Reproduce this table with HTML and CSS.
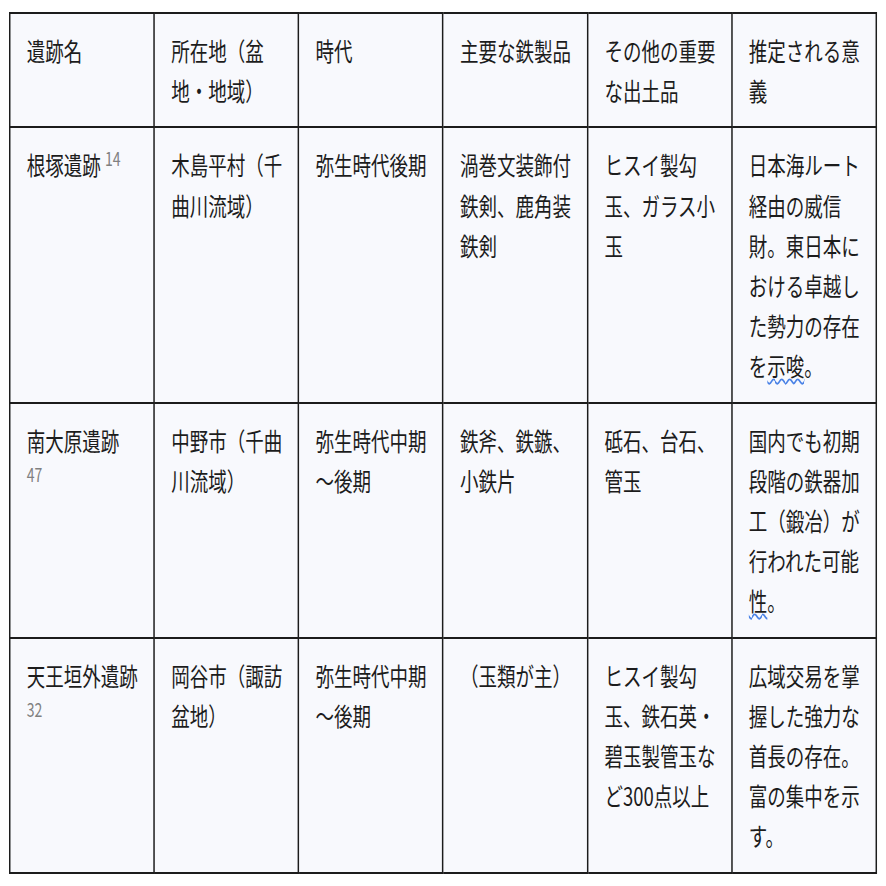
FILE: index.html
```html
<!DOCTYPE html>
<html lang="ja">
<head>
<meta charset="utf-8">
<title>遺跡一覧</title>
<link rel="stylesheet" href="styles.css">
</head>
<body>
<div class="frame">
<table class="sites">
  <thead>
    <tr>
      <th>遺跡名</th>
      <th>所在地（盆地・地域）</th>
      <th>時代</th>
      <th>主要な鉄製品</th>
      <th>その他の重要な出土品</th>
      <th>推定される意義</th>
    </tr>
  </thead>
  <tbody>
    <tr>
      <td>根塚遺跡 <sup class="cite">14</sup></td>
      <td>木島平村（千曲川流域）</td>
      <td>弥生時代後期</td>
      <td>渦巻文装飾付鉄剣、鹿角装鉄剣</td>
      <td>ヒスイ製勾玉、ガラス小玉</td>
      <td>日本海ルート経由の威信財。東日本における卓越した勢力の存在を<span class="spell">示唆</span>。</td>
    </tr>
    <tr>
      <td>南大原遺跡 <sup class="cite">47</sup></td>
      <td>中野市（千曲川流域）</td>
      <td>弥生時代中期～後期</td>
      <td>鉄斧、鉄鏃、小鉄片</td>
      <td>砥石、台石、管玉</td>
      <td>国内でも初期段階の鉄器加工（鍛冶）が行われた可能<span class="spell">性</span>。</td>
    </tr>
    <tr>
      <td>天王垣外遺跡 <sup class="cite">32</sup></td>
      <td>岡谷市（諏訪盆地）</td>
      <td>弥生時代中期～後期</td>
      <td>（玉類が主）</td>
      <td>ヒスイ製勾玉、鉄石英・碧玉製管玉など300点以上</td>
      <td>広域交易を掌握した強力な首長の存在。富の集中を示す。</td>
    </tr>
  </tbody>
</table>
</div>
</body>
</html>
```

FILE: styles.css
```css
html, body {
  margin: 0;
  padding: 0;
  background: #ffffff;
  overflow: hidden;
}

.frame {
  padding: 12px 0 0 9px;
}

.sites {
  width: 1173px;
  table-layout: fixed;
  border-collapse: collapse;
  transform: scaleX(0.74);
  transform-origin: 0 0;
  font-family: "Noto Sans CJK JP", "Noto Sans", sans-serif;
  font-size: 25px;
  line-height: 40.2px;
  color: #1c1c1c;
  background: #f8f9fd;
}

.sites th,
.sites td {
  border: 2px solid #1c1c1c;
  padding: 16px 12px 16px 22px;
  vertical-align: top;
  text-align: left;
  font-weight: 400;
}

.cite {
  font-size: 19px;
  line-height: 0;
  color: #808080;
  padding-right: 14px;
}

.spell {
  text-decoration: underline wavy #4a82e6;
  text-decoration-thickness: 1.5px;
  text-underline-offset: 2px;
}
```
